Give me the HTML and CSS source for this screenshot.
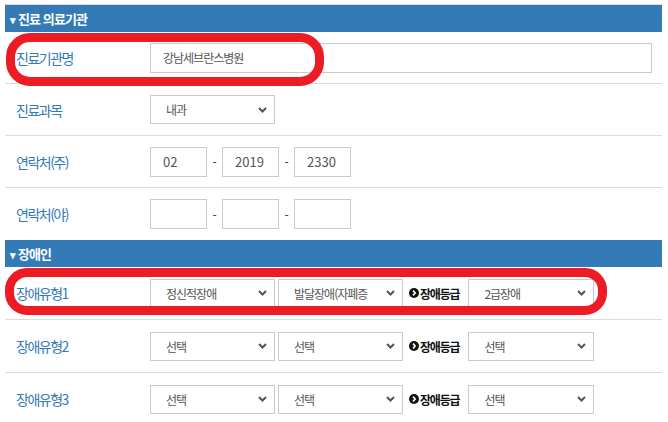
FILE: index.html
```html
<!DOCTYPE html>
<html lang="ko">
<head>
<meta charset="utf-8">
<link rel="stylesheet" href="styles.css">
</head>
<body>
<div class="form">
  <div class="sec-head"><span class="tri">&#9662;</span>진료 의료기관</div>

  <div class="row">
    <div class="label">진료기관명</div>
    <div class="field text wide ko">강남세브란스병원</div>
    <div class="mark mark1"></div>
  </div>

  <div class="row">
    <div class="label">진료과목</div>
    <div class="field select ko"><span>내과</span><svg class="chev" width="9" height="6" viewBox="0 0 9 6"><polyline points="1,1 4.5,4.5 8,1" fill="none" stroke="#555" stroke-width="2"/></svg></div>
  </div>

  <div class="row">
    <div class="label">연락처(주)</div>
    <div class="phone">
      <div class="field text tel num">02</div><span class="dash">-</span>
      <div class="field text tel num">2019</div><span class="dash">-</span>
      <div class="field text tel num">2330</div>
    </div>
  </div>

  <div class="row last">
    <div class="label">연락처(야)</div>
    <div class="phone">
      <div class="field text tel"></div><span class="dash">-</span>
      <div class="field text tel"></div><span class="dash">-</span>
      <div class="field text tel"></div>
    </div>
  </div>

  <div class="sec-head"><span class="tri">&#9662;</span>장애인</div>

  <div class="row row2">
    <div class="label">장애유형1</div>
    <div class="group">
      <div class="field select ko"><span>정신적장애</span><svg class="chev" width="9" height="6" viewBox="0 0 9 6"><polyline points="1,1 4.5,4.5 8,1" fill="none" stroke="#555" stroke-width="2"/></svg></div>
      <div class="field select ko"><span>발달장애(자폐증</span><svg class="chev" width="9" height="6" viewBox="0 0 9 6"><polyline points="1,1 4.5,4.5 8,1" fill="none" stroke="#555" stroke-width="2"/></svg></div>
      <div class="grade"><svg width="10" height="10" viewBox="0 0 10 10"><circle cx="5" cy="5" r="5" fill="#111"/><polyline points="4,2.6 6.2,5 4,7.4" fill="none" stroke="#fff" stroke-width="1.6"/></svg>장애등급</div>
      <div class="field select ko g"><span>2급장애</span><svg class="chev" width="9" height="6" viewBox="0 0 9 6"><polyline points="1,1 4.5,4.5 8,1" fill="none" stroke="#555" stroke-width="2"/></svg></div>
    </div>
    <div class="mark mark2"></div>
  </div>

  <div class="row row2">
    <div class="label">장애유형2</div>
    <div class="group">
      <div class="field select ko"><span>선택</span><svg class="chev" width="9" height="6" viewBox="0 0 9 6"><polyline points="1,1 4.5,4.5 8,1" fill="none" stroke="#555" stroke-width="2"/></svg></div>
      <div class="field select ko"><span>선택</span><svg class="chev" width="9" height="6" viewBox="0 0 9 6"><polyline points="1,1 4.5,4.5 8,1" fill="none" stroke="#555" stroke-width="2"/></svg></div>
      <div class="grade"><svg width="10" height="10" viewBox="0 0 10 10"><circle cx="5" cy="5" r="5" fill="#111"/><polyline points="4,2.6 6.2,5 4,7.4" fill="none" stroke="#fff" stroke-width="1.6"/></svg>장애등급</div>
      <div class="field select ko g"><span>선택</span><svg class="chev" width="9" height="6" viewBox="0 0 9 6"><polyline points="1,1 4.5,4.5 8,1" fill="none" stroke="#555" stroke-width="2"/></svg></div>
    </div>
  </div>

  <div class="row row2">
    <div class="label">장애유형3</div>
    <div class="group">
      <div class="field select ko"><span>선택</span><svg class="chev" width="9" height="6" viewBox="0 0 9 6"><polyline points="1,1 4.5,4.5 8,1" fill="none" stroke="#555" stroke-width="2"/></svg></div>
      <div class="field select ko"><span>선택</span><svg class="chev" width="9" height="6" viewBox="0 0 9 6"><polyline points="1,1 4.5,4.5 8,1" fill="none" stroke="#555" stroke-width="2"/></svg></div>
      <div class="grade"><svg width="10" height="10" viewBox="0 0 10 10"><circle cx="5" cy="5" r="5" fill="#111"/><polyline points="4,2.6 6.2,5 4,7.4" fill="none" stroke="#fff" stroke-width="1.6"/></svg>장애등급</div>
      <div class="field select ko g"><span>선택</span><svg class="chev" width="9" height="6" viewBox="0 0 9 6"><polyline points="1,1 4.5,4.5 8,1" fill="none" stroke="#555" stroke-width="2"/></svg></div>
    </div>
  </div>
</div>
</body>
</html>
```

FILE: styles.css
```css
* { box-sizing: border-box; }
body {
  margin: 0;
  background: #fff;
  font-family: "Noto Sans CJK KR", "Noto Sans", sans-serif;
}
.form {
  margin: 4px 6px 0 5px;
  border-top: 1px solid #dcdcdc;
}
.sec-head {
  height: 27px;
  background: #337ab7;
  color: #fff;
  font-size: 13px;
  font-weight: bold;
  letter-spacing: -0.9px;
  display: flex;
  align-items: center;
  padding-left: 5px;
}
.tri {
  font-size: 11px;
  margin-right: 2px;
  letter-spacing: 0;
}
.row {
  position: relative;
  display: flex;
  align-items: center;
  height: 52px;
  border-bottom: 1px solid #dcdcdc;
}
.row.last { border-bottom: none; }
.row2 { height: 53px; }
.label {
  width: 145px;
  flex: none;
  padding-left: 11px;
  color: #337ab7;
  font-size: 14px;
  letter-spacing: -1.5px;
}
.field {
  height: 30px;
  border: 1px solid #cbcbcb;
  background: #fff;
  color: #555;
  font-size: 12px;
  display: flex;
  align-items: center;
}
.ko { letter-spacing: -1px; }
.num { font-size: 13px; letter-spacing: 0; }
.text { padding-left: 12px; }
.wide { width: 502px; }
.tel { width: 57px; }
.phone { display: flex; align-items: center; }
.dash {
  width: 15px;
  text-align: center;
  font-size: 12px;
  color: #333;
}
.select {
  width: 125px;
  height: 29px;
  padding: 0 7px 0 15px;
  justify-content: space-between;
}
.select.g { width: 126px; }
.chev { flex: none; }
.group { display: flex; align-items: center; gap: 3px; }
.grade {
  display: flex;
  align-items: center;
  gap: 1px;
  padding: 0 6px 0 3px;
  font-size: 12px;
  font-weight: bold;
  color: #111;
  letter-spacing: -1.2px;
}
.mark {
  position: absolute;
  border: 9px solid #ed1c24;
  border-radius: 24px;
  pointer-events: none;
}
.mark1 { left: 1px; top: 1px; width: 318px; height: 53px; }
.mark2 { left: 0; top: 1px; width: 602px; height: 47px; border-radius: 22px; }
```
